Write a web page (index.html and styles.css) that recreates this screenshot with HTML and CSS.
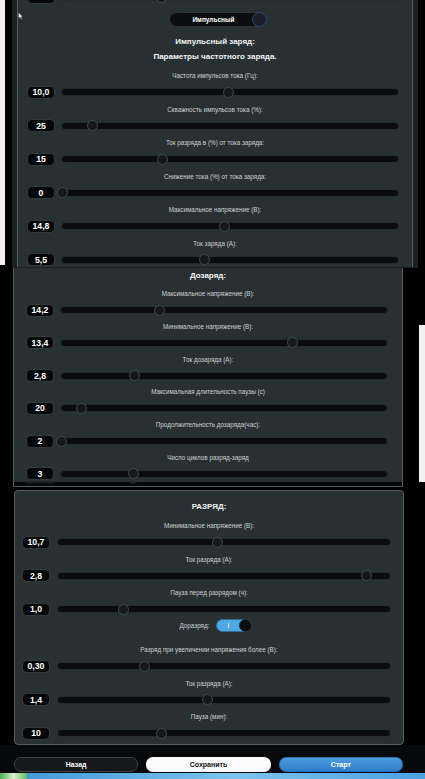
FILE: index.html
```html
<!DOCTYPE html>
<html lang="ru">
<head>
<meta charset="utf-8">
<link rel="stylesheet" href="styles.css">
</head>
<body>
<div class="screen">
  <section class="band band-1">
    <div class="edge-white"></div>
    <div class="panel panel-1">
      <div class="row cut"><span class="val"></span><div class="track"><span class="thumb" style="left:29.6%"></span></div></div>
      <div class="mode"><div class="switch-mode"><span>Импульсный</span><i class="knob"></i></div></div>
      <h2 class="title">Импульсный заряд:</h2>
      <h3 class="title sub">Параметры частотного заряда.</h3>
      <div class="fields">
        <div class="field"><div class="label">Частота импульсов тока (Гц):</div><div class="row"><span class="val">10,0</span><div class="track"><span class="thumb" style="left:49.7%"></span></div></div></div>
        <div class="field"><div class="label">Скважность импульсов тока (%):</div><div class="row"><span class="val">25</span><div class="track"><span class="thumb" style="left:9.2%"></span></div></div></div>
        <div class="field"><div class="label">Ток разряда в (%) от тока заряда:</div><div class="row"><span class="val">15</span><div class="track"><span class="thumb" style="left:29.9%"></span></div></div></div>
        <div class="field"><div class="label">Снижение тока (%) от тока заряда:</div><div class="row"><span class="val">0</span><div class="track"><span class="thumb" style="left:0%"></span></div></div></div>
        <div class="field"><div class="label">Максимальное напряжение (В):</div><div class="row"><span class="val">14,8</span><div class="track"><span class="thumb" style="left:48.5%"></span></div></div></div>
        <div class="field"><div class="label">Ток заряда (А):</div><div class="row"><span class="val">5,5</span><div class="track"><span class="thumb" style="left:42.3%"></span></div></div></div>
      </div>
    </div>
    <svg class="cursor" viewBox="0 0 5 8" width="5" height="8"><path d="M0.5 0.5 L0.5 6.5 L1.9 5.1 L3 7.5 L4 7 L2.9 4.7 L4.8 4.7 Z" fill="#fff" stroke="#222" stroke-width="0.4"/></svg>
  </section>

  <section class="band band-2">
    <div class="panel panel-2">
      <h2 class="title">Дозаряд:</h2>
      <div class="fields">
        <div class="field"><div class="label">Максимальное напряжение (В):</div><div class="row"><span class="val">14,2</span><div class="track"><span class="thumb" style="left:30.2%"></span></div></div></div>
        <div class="field"><div class="label">Минимальное напряжение (В):</div><div class="row"><span class="val">13,4</span><div class="track"><span class="thumb" style="left:71%"></span></div></div></div>
        <div class="field"><div class="label">Ток дозаряда (А):</div><div class="row"><span class="val">2,8</span><div class="track"><span class="thumb" style="left:22.6%"></span></div></div></div>
        <div class="field"><div class="label">Максимальная длительность паузы (с)</div><div class="row"><span class="val">20</span><div class="track"><span class="thumb" style="left:6.4%"></span></div></div></div>
        <div class="field"><div class="label">Продолжительность дозаряда(час):</div><div class="row"><span class="val">2</span><div class="track"><span class="thumb" style="left:0%"></span></div></div></div>
        <div class="field"><div class="label">Число циклов разряд-заряд</div><div class="row"><span class="val">3</span><div class="track"><span class="thumb" style="left:22.3%"></span></div></div></div>
      </div>
      <div class="stitch"><span class="stitch-box"></span><span class="stitch-thumb"></span></div>
    </div>
    <div class="edge-white-r"></div>
  </section>

  <section class="band band-3">
    <div class="panel panel-3">
      <h2 class="title">РАЗРЯД:</h2>
      <div class="fields">
        <div class="field"><div class="label">Минимальное напряжение (В):</div><div class="row"><span class="val">10,7</span><div class="track"><span class="thumb" style="left:48%"></span></div></div></div>
        <div class="field"><div class="label">Ток разряда (А):</div><div class="row"><span class="val">2,8</span><div class="track"><span class="thumb" style="left:92.9%"></span></div></div></div>
        <div class="field"><div class="label">Пауза перед разрядом (ч):</div><div class="row"><span class="val">1,0</span><div class="track"><span class="thumb" style="left:19.8%"></span></div></div></div>
      </div>
      <div class="toggle-row"><span class="toggle-label">Доразряд:</span><div class="switch-on"><span>I</span><i class="knob-on"></i></div></div>
      <div class="fields fields-low">
        <div class="field"><div class="label">Разряд при увеличении напряжения более (В):</div><div class="row"><span class="val">0,30</span><div class="track"><span class="thumb" style="left:26.1%"></span></div></div></div>
        <div class="field"><div class="label">Ток разряда (А):</div><div class="row"><span class="val">1,4</span><div class="track"><span class="thumb" style="left:45%"></span></div></div></div>
        <div class="field"><div class="label">Пауза (мин):</div><div class="row"><span class="val">10</span><div class="track"><span class="thumb" style="left:31.2%"></span></div></div></div>
      </div>
    </div>
  </section>

  <nav class="actions">
    <button class="btn btn-back">Назад</button>
    <button class="btn btn-save">Сохранить</button>
    <button class="btn btn-start">Старт</button>
  </nav>

  <footer class="taskbar"><span class="task-icon"></span></footer>
</div>
</body>
</html>
```

FILE: styles.css
```css
* {
  box-sizing: border-box;
  margin: 0;
  padding: 0;
}

html, body {
  background: #000;
  overflow: hidden;
}

body {
  width: 425px;
  height: 779px;
  font-family: "Liberation Sans", Arial, sans-serif;
  color: #f0f2f2;
}

.screen {
  display: flex;
  flex-direction: column;
  width: 425px;
}

.band {
  display: flex;
  align-items: flex-start;
  position: relative;
  flex: none;
}

.band-1 {
  height: 268px;
  overflow: hidden;
}

.band-2 {
  height: 220px;
}

.band-3 {
  height: 257px;
}

.edge-white {
  flex: none;
  width: 5px;
  height: 265px;
  background: #f2f2f2;
}

.edge-white-r {
  flex: none;
  width: 6px;
  height: 157px;
  margin-top: 57px;
  margin-left: auto;
  background: #f2f2f2;
}

.cursor {
  position: absolute;
  left: 18px;
  top: 12px;
}

.panel {
  flex: none;
  display: flex;
  flex-direction: column;
  background: #283032;
  border: 1px solid #535d5f;
}

.panel-1 {
  width: 396px;
  margin: -30px 0 0 12px;
  padding-top: 19px;
  border-bottom: none;
  box-shadow: 0 0 0 5px #1b2123;
}

.panel-2 {
  width: 390px;
  margin-left: 13px;
  padding-top: 2px;
  border-top: none;
}

.panel-3 {
  width: 390px;
  height: 255px;
  margin: 2px 0 0 14px;
  padding-top: 10px;
  border-radius: 4px;
}

/* headings */
.title {
  font-size: 8px;
  font-weight: bold;
  line-height: 12px;
  text-align: center;
  color: #f3f4f4;
}

.panel-1 .title {
  margin-top: 9px;
}

.panel-1 .sub {
  margin-top: 3px;
}

/* fields */
.fields {
  display: flex;
  flex-direction: column;
  gap: 5.5px;
}

.panel-1 .fields {
  margin-top: 8px;
}

.panel-2 .fields {
  margin-top: 7px;
  gap: 4.8px;
}

.panel-3 .fields {
  margin-top: 8px;
}

.panel-3 .fields-low {
  margin-top: 13px;
}

.label {
  height: 10px;
  margin-bottom: 4px;
  font-size: 6.3px;
  line-height: 10px;
  text-align: center;
  color: #cdd2d3;
  white-space: nowrap;
}

.row {
  display: flex;
  align-items: center;
  height: 14px;
}

.panel-1 .row {
  gap: 6px;
  padding: 0 13px 0 9px;
}

.panel-2 .row {
  gap: 6px;
  padding: 0 14px 0 12px;
}

.panel-3 .row {
  gap: 7px;
  padding: 0 12px 0 7px;
}

.val {
  flex: none;
  display: flex;
  align-items: center;
  justify-content: center;
  width: 28px;
  height: 13px;
  border-radius: 5px;
  background: #060708;
  border: 1px solid #323a3c;
  font-size: 8.7px;
  font-weight: bold;
  color: #fff;
}

.track {
  flex: 1;
  position: relative;
  height: 8px;
  border-radius: 4px;
  background: #0a0c0d;
  border: 1px solid #252c2e;
}

.thumb {
  position: absolute;
  top: 50%;
  width: 11px;
  height: 11px;
  margin: -5.5px 0 0 -5.5px;
  border-radius: 50%;
  background: #15191b;
  border: 1px solid #414a4c;
}

/* mode switch */
.mode {
  display: flex;
  justify-content: center;
  margin-top: 8px;
  padding-left: 6px;
}

.switch-mode {
  display: flex;
  align-items: center;
  width: 98px;
  height: 15px;
  border-radius: 8px;
  background: #0b0d0f;
  border: 1px solid #2e3538;
}

.switch-mode span {
  flex: 1;
  padding-left: 5px;
  text-align: center;
  font-size: 6.5px;
  font-weight: bold;
  color: #fff;
}

.knob {
  flex: none;
  width: 15px;
  height: 15px;
  margin-right: -1px;
  border-radius: 50%;
  background: #1b2026;
  border: 1.5px solid #2a4e7c;
}

/* stitch strip */
.stitch {
  position: relative;
  height: 4px;
  margin-top: 1px;
  background: #060708;
}

.stitch-box {
  position: absolute;
  left: 12px;
  top: 0;
  width: 28px;
  height: 2px;
  border-radius: 0 0 4px 4px;
  background: #111415;
}

.stitch-thumb {
  position: absolute;
  left: 115px;
  top: 0;
  width: 8px;
  height: 2px;
  border-radius: 0 0 4px 4px;
  background: #1a1e20;
}

/* toggle row */
.toggle-row {
  display: flex;
  align-items: center;
  justify-content: center;
  gap: 7px;
  height: 14px;
  margin-top: 2px;
  padding-left: 14px;
}

.toggle-label {
  font-size: 6.3px;
  color: #cdd2d3;
}

.switch-on {
  display: flex;
  align-items: center;
  width: 36px;
  height: 13px;
  border-radius: 7px;
  background: #4ea8e2;
  border: 1px solid #2f6f9d;
}

.switch-on span {
  flex: 1;
  text-align: center;
  font-size: 6.5px;
  color: #fff;
}

.knob-on {
  flex: none;
  width: 13px;
  height: 13px;
  margin-right: -1px;
  border-radius: 50%;
  background: #0c0e10;
  border: 1px solid #1e2a33;
}

/* actions */
.actions {
  flex: none;
  display: grid;
  grid-template-columns: repeat(3, 1fr);
  gap: 8px;
  height: 28px;
  padding: 12px 22px 0 14px;
  background: #08090a;
}

.btn {
  display: flex;
  align-items: center;
  justify-content: center;
  height: 15px;
  border-radius: 7px;
  border: 1px solid transparent;
  font-family: "Liberation Sans", Arial, sans-serif;
  font-size: 7px;
  font-weight: bold;
}

.btn-back {
  background: #16191c;
  border-color: #3a4043;
  color: #fff;
}

.btn-save {
  background: #fbfbfb;
  color: #111;
}

.btn-start {
  background: linear-gradient(#4d9de2, #2d7dc9);
  border-color: #2a6fb0;
  color: #fff;
}

/* taskbar */
.taskbar {
  flex: none;
  display: flex;
  height: 6px;
  background: linear-gradient(90deg, #3c95d6, #7cc3ee 55%, #4aa2e0);
}

.task-icon {
  width: 27px;
  height: 6px;
  background: linear-gradient(90deg, #4caf50, #d8f0d0 50%, #5cbf60);
}
```
